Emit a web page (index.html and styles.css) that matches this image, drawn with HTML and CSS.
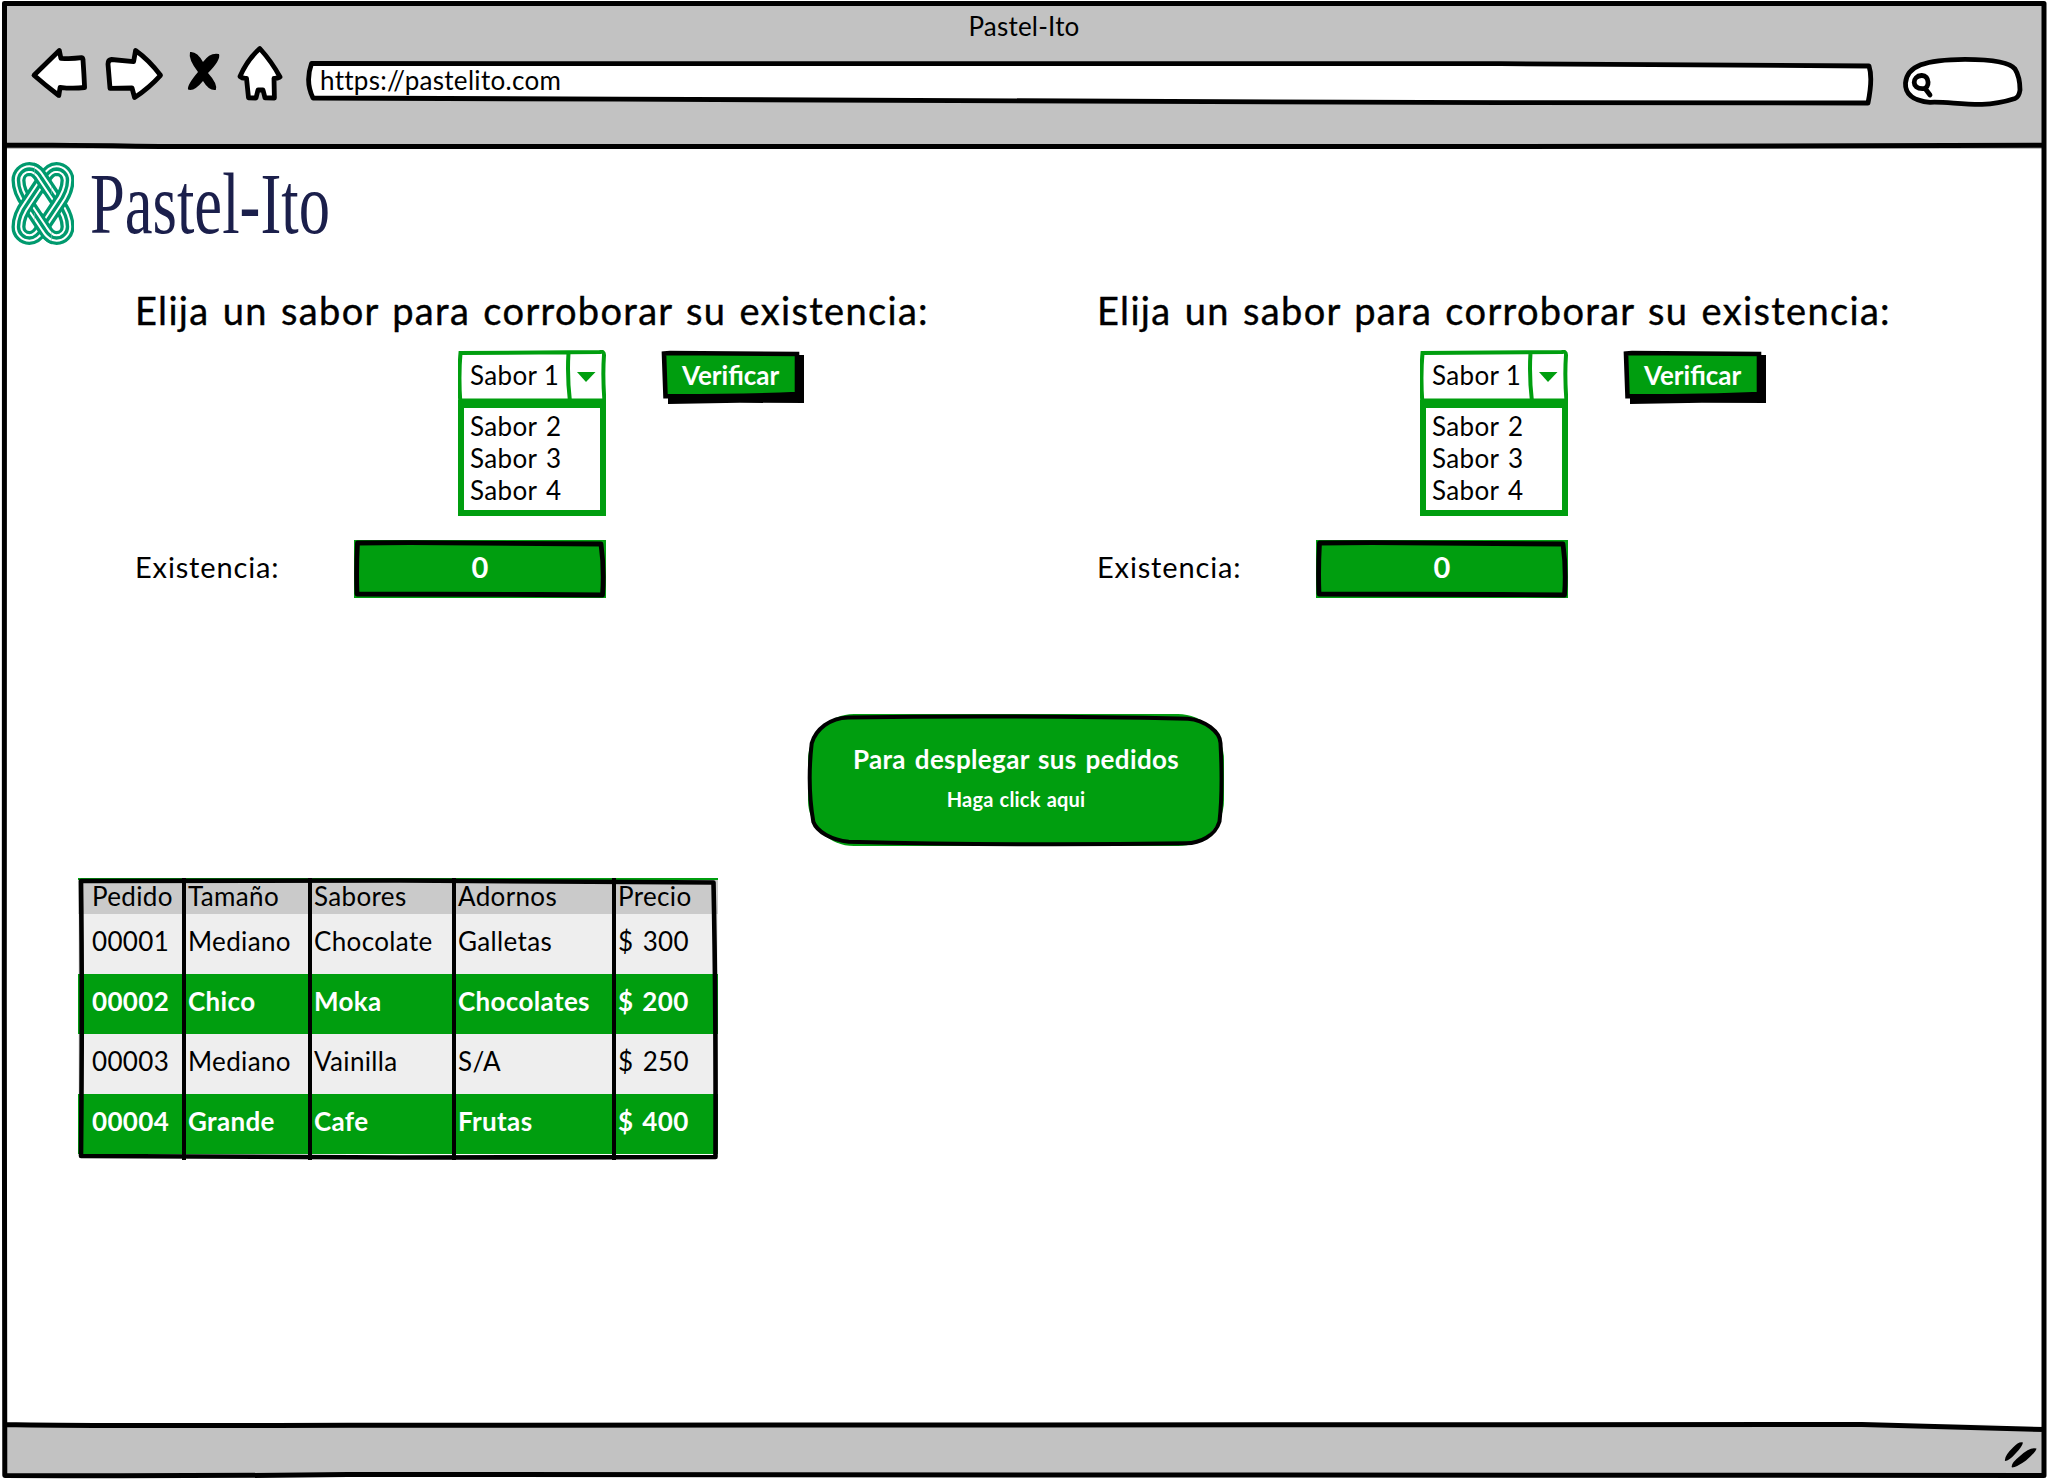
FILE: index.html
```html
<!DOCTYPE html>
<html lang="es">
<head>
<meta charset="utf-8">
<title>Pastel-Ito</title>
<link rel="stylesheet" href="styles.css">
</head>
<body>
<div class="window">
  <header class="toolbar">
    <div class="window-title">Pastel-Ito</div>
    <nav class="nav">
      <svg class="nav-icon back" viewBox="29 44 60 64" width="60" height="64"><path d="M34 75.3 59.3 50.5 60.9 58.3Q72 59 81.5 57.7Q83 58 83 60Q84 74 84.600 87.500Q72 89 60.100 87.300L58.800 95.500Q45 85 34 75.300Z"/></svg>
      <svg class="nav-icon forward" viewBox="103 44 62 64" width="62" height="64"><path d="M160.500 75.300Q149 60 135.600 50.500L133.600 61.700Q122 60.500 111.500 59.500Q108 60 108 64L110 88.300 132 88 134.600 97.500Q149 88 160.500 75.300Z"/></svg>
      <svg class="nav-icon stop" viewBox="184 44 39 64" width="39" height="64"><path class="solid" d="M190 52Q197 51 203 62Q210 52 219 54Q221 60 208 73Q218 84 215.800 90Q209 91 203 81Q194 92 188 89.500Q187 85 198 72Q188 59 190 52Z"/></svg>
      <svg class="nav-icon home" viewBox="235 44 50 64" width="50" height="64"><path d="M259.800 48.500Q272 62 280 77Q277 78.500 274 78.300L274.400 98 265 97.800 263 90 258 90 256 98 248.500 97.800 246.500 78.300Q242 78.500 240 76.500Q247 60 259.800 48.500Z"/></svg>
      <div class="address">
        <svg class="sketch" viewBox="304 44 1572 64" width="1572" height="64"><path d="M311.500 63.500Q900 62 1500 63.700L1869 66Q1873 78 1868 103L1500 102.700Q900 102 620 99.200L313 98Q305 82 311.500 63.500Z"/></svg>
        <span class="address-text">https://pastelito.com</span>
      </div>
      <svg class="nav-icon search" viewBox="1899 44 126 64" width="126" height="64"><path d="M1930 102.300C1912 101 1905 93 1905.500 83C1907 66 1925 59.500 1965 59.300C1990 59.300 2010 62 2015 69C2020 77 2020 86 2020 90Q2019 97 2015 98.500Q1998 104 1982 104.300C1960 104.500 1945 101.500 1930 102.300Z"/><path class="lens" d="M1921.500 75.500C1930 75 1930 89 1923 88.600C1911 89 1912 76 1921.500 75.500ZM1925.500 89 1930 95"/></svg>
    </nav>
  </header>

  <main class="page">
    <div class="brand">
      <svg class="brand-mark" viewBox="11 161 63 85" width="63" height="85">
        <defs>
          <path id="ring-a" d="M29.500 169C35 169 38.500 173 41.500 178L58.500 203.500C64 211 67.500 218 67.500 226.700A11.200 11.200 0 0 1 56.500 238C51 238 47.500 234 44.500 229L27.500 203.500C22 196 18.500 189 18.500 180.300A11.200 11.200 0 0 1 29.500 169Z"/>
          <path id="ring-b" d="M56.500 169C51 169 47.500 173 44.500 178L27.500 203.500C22 211 18.500 218 18.500 226.700A11.200 11.200 0 0 0 29.500 238C35 238 38.500 234 41.500 229L58.500 203.500C64 196 67.500 189 67.500 180.300A11.200 11.200 0 0 0 56.500 169Z"/>
          <clipPath id="crossings"><rect x="34.500" y="160" width="17" height="34"/><rect x="34.500" y="213" width="17" height="34"/></clipPath>
        </defs>
        <g><use href="#ring-a" class="band-edge"/><use href="#ring-a" class="band-gap"/><use href="#ring-a" class="band-core"/></g>
        <g><use href="#ring-b" class="band-edge"/><use href="#ring-b" class="band-gap"/><use href="#ring-b" class="band-core"/></g>
        <g clip-path="url(#crossings)"><use href="#ring-a" class="band-edge"/><use href="#ring-a" class="band-gap"/><use href="#ring-a" class="band-core"/></g>
      </svg>
      <span class="brand-name">Pastel-Ito</span>
    </div>

    <div class="checkers">
      <section class="checker">
        <h2>Elija un sabor para corroborar su existencia:</h2>
        <div class="choose">
          <div class="select">
            <div class="select-head">
              <svg class="sketch" viewBox="458 350 148 52" width="148" height="52"><path d="M460.300 402Q458.500 376 460.500 353L600 352Q604 351 604 355Q602.500 376 604.500 402M568.500 353Q567 376 570 402"/><path class="edge" d="M459 400.500H605"/><path class="caret" d="M577 372H595.500L586 382Z"/></svg>
              <span class="label">Sabor 1</span>
            </div>
            <ul class="options"><li>Sabor 2</li><li>Sabor 3</li><li>Sabor 4</li></ul>
          </div>
          <div class="button">
            <svg class="sketch" viewBox="661 350 144 55" width="144" height="55"><path class="shadow" d="M668 390H795V355H804V403L740 402.800 668 404Z"/><path class="face" d="M664 353.500 670 353 797 354V394Q740 396.500 665.500 396.300Z"/></svg>
            <span class="label bold">Verificar</span>
          </div>
        </div>
        <div class="stock">
          <span class="stock-label">Existencia:</span>
          <div class="field">
            <svg class="sketch" viewBox="354 540 252 58" width="252" height="58"><path d="M357.500 543 410 542.700 601 544Q604.500 570 602.500 595L540 594.500 357 594Q356 570 357.500 543Z"/></svg>
            <span class="bold">0</span>
          </div>
        </div>
      </section>
      <section class="checker">
        <h2>Elija un sabor para corroborar su existencia:</h2>
        <div class="choose">
          <div class="select">
            <div class="select-head">
              <svg class="sketch" viewBox="458 350 148 52" width="148" height="52"><path d="M460.300 402Q458.500 376 460.500 353L600 352Q604 351 604 355Q602.500 376 604.500 402M568.500 353Q567 376 570 402"/><path class="edge" d="M459 400.500H605"/><path class="caret" d="M577 372H595.500L586 382Z"/></svg>
              <span class="label">Sabor 1</span>
            </div>
            <ul class="options"><li>Sabor 2</li><li>Sabor 3</li><li>Sabor 4</li></ul>
          </div>
          <div class="button">
            <svg class="sketch" viewBox="661 350 144 55" width="144" height="55"><path class="shadow" d="M668 390H795V355H804V403L740 402.800 668 404Z"/><path class="face" d="M664 353.500 670 353 797 354V394Q740 396.500 665.500 396.300Z"/></svg>
            <span class="label bold">Verificar</span>
          </div>
        </div>
        <div class="stock">
          <span class="stock-label">Existencia:</span>
          <div class="field">
            <svg class="sketch" viewBox="354 540 252 58" width="252" height="58"><path d="M357.500 543 410 542.700 601 544Q604.500 570 602.500 595L540 594.500 357 594Q356 570 357.500 543Z"/></svg>
            <span class="bold">0</span>
          </div>
        </div>
      </section>
    </div>

    <div class="orders-button">
      <svg class="sketch" viewBox="806 712 420 136" width="420" height="136"><rect class="fill" x="808" y="714" width="416" height="132" rx="46"/><path class="line" d="M848 717.500Q1010 715 1188 718.700C1205 720 1220 732 1220.500 743Q1223 790 1219.500 821.500C1215 836 1200 843 1186 843.300Q1010 846 848.700 841.700C832 840 817 832 813.300 821.700Q807 785 811.700 743.300C816 729 830 718 848 717.500Z"/></svg>
      <span class="big bold">Para desplegar sus pedidos</span>
      <span class="small bold">Haga click aqui</span>
    </div>

    <div class="orders">
      <table>
        <thead><tr><th>Pedido</th><th>Tamaño</th><th>Sabores</th><th>Adornos</th><th>Precio</th></tr></thead>
        <tbody>
          <tr><td>00001</td><td>Mediano</td><td>Chocolate</td><td>Galletas</td><td>$ 300</td></tr>
          <tr class="hot"><td>00002</td><td>Chico</td><td>Moka</td><td>Chocolates</td><td>$ 200</td></tr>
          <tr><td>00003</td><td>Mediano</td><td>Vainilla</td><td>S/A</td><td>$ 250</td></tr>
          <tr class="hot"><td>00004</td><td>Grande</td><td>Cafe</td><td>Frutas</td><td>$ 400</td></tr>
        </tbody>
      </table>
      <svg class="sketch" viewBox="78 878 640 282" width="640" height="282"><path class="top-edge" d="M78 879H718"/><path d="M81 881 400 880.500 713.500 882.500Q716 1000 715.500 1157L400 1157.500 81 1156Q82.500 1000 81 881Z"/><path class="column" d="M184 878V1160M310 878V1160M454 878V1160M614 878V1160"/></svg>
    </div>
  </main>

  <footer class="status">
    <svg class="grip" viewBox="2002 1438 36 32" width="36" height="32"><path d="M2005 1461Q2004 1456 2013 1447.500Q2019 1441 2023 1442.500Q2022 1447 2016 1453Q2009 1461 2005 1461ZM2012 1467.500Q2010 1464 2020 1456Q2030 1446.500 2036.500 1448.500Q2036 1452 2026 1460.500Q2017 1467 2012 1467.500Z"/></svg>
  </footer>
  <svg class="frame" viewBox="0 0 2048 1480" width="2048" height="1480"><path class="footer-gap" d="M1862 1424.500 2044 1424V1429.500Z"/><path d="M4.500 3.500H2044Q2043.500 900 2044 1475.500Q1200 1476 348 1474.500Q180 1476.500 4.800 1475.500L4.300 1000Q4 400 4.500 3.500ZM5 145Q60 145 160 146.500H1500L2044 145.300M5 1424.500Q60 1426 348 1425.300L1862 1424.500 2044 1429.500"/></svg>
</div>
</body>
</html>
```
FILE: styles.css
```css
* { box-sizing: border-box; }

body {
  margin: 0;
  background: #fff;
  color: #000;
  font: 26px/32px Lato, "Liberation Sans", sans-serif;
  letter-spacing: .35px;
  word-spacing: 2.2px;
}

.window {
  position: relative;
  width: 2048px;
  height: 1480px;
  display: flex;
  flex-direction: column;
  overflow: hidden;
}

.frame {
  position: absolute;
  inset: 0;
  fill: none;
  stroke: #000;
  stroke-width: 5;
  stroke-linejoin: round;
}
.frame .footer-gap { fill: #fff; stroke: none; }

.sketch { position: absolute; top: 0; left: 0; }
.bold { font-weight: 700; color: #fff; }

/* browser chrome */
.toolbar { height: 146px; margin: 3px 4px -3px; background: #c2c2c2; }
.window-title { height: 41px; line-height: 47px; text-align: center; letter-spacing: .2px; }
.nav { display: flex; padding-left: 25px; }
.nav-icon, .address .sketch { fill: #fff; stroke: #000; stroke-width: 4.8; stroke-linejoin: round; stroke-linecap: round; }
.nav-icon .solid { fill: #000; stroke: none; }
.nav-icon .lens { fill: none; }
.forward { margin-left: 14px; }
.stop { margin-left: 19px; }
.home { margin-left: 12px; }
.address { position: relative; width: 1572px; height: 64px; margin-left: 19px; padding-left: 16px; line-height: 73px; letter-spacing: .3px; }
.address-text { position: relative; }
.search { margin-left: 23px; }

/* page */
.page { flex: 1; min-height: 0; }
.brand { display: flex; height: 134px; padding: 15px 0 0 11px; margin-left: -4px; padding-left: 15px; }
.brand { margin-left: 0; padding-left: 11px; }
.brand-mark { fill: none; }
.band-edge { stroke: #009a6e; stroke-width: 14; }
.band-gap { stroke: #fff; stroke-width: 7.4; }
.band-core { stroke: #009a6e; stroke-width: 3.4; }
.brand-name {
  margin-left: 16px;
  color: #1b1f4b;
  font: 86px/86px "Liberation Serif", serif;
  letter-spacing: 0;
  transform: scaleX(.728);
  transform-origin: 0 0;
}

.checkers { display: grid; grid-template-columns: 962px 962px; padding-left: 135px; }
h2 {
  margin: 0;
  height: 70px;
  font-size: 38px;
  font-weight: 400;
  line-height: 61px;
  letter-spacing: 1.33px;
  white-space: nowrap;
  -webkit-text-stroke: .4px #000;
}
.choose { display: flex; align-items: flex-start; padding-left: 323px; height: 190px; gap: 55px; }
.select { width: 148px; }
.select-head { position: relative; height: 50px; padding-left: 12px; line-height: 50px; word-spacing: 0; }
.select-head .sketch { fill: none; stroke: #009e0f; stroke-width: 4; }
.select-head .caret { fill: #009e0f; stroke: none; }
.label { position: relative; }
.options { margin: 0; height: 116px; padding: 2px 0 0 6px; border: 6px solid #009e0f; border-top-width: 8px; list-style: none; }
.button { position: relative; width: 144px; height: 55px; line-height: 50px; padding-left: 21px; letter-spacing: 0; }
.button .face { fill: #009e0f; stroke: #000; stroke-width: 4.6; }
.stock { display: flex; height: 58px; line-height: 54px; }
.stock-label { width: 219px; font-size: 29px; letter-spacing: .85px; }
.field { position: relative; width: 252px; background: #009e0f; text-align: center; font-size: 29px; }
.field .sketch { fill: none; stroke: #000; stroke-width: 4.8; stroke-linejoin: round; }
.field span { position: relative; }

.orders-button {
  position: relative;
  display: flex;
  flex-direction: column;
  align-items: center;
  width: 420px;
  height: 136px;
  margin: 114px 0 0 806px;
  padding-top: 31px;
}
.orders-button .fill { fill: #009e0f; }
.orders-button .line { fill: none; stroke: #000; stroke-width: 4; }
.orders-button span { position: relative; }
.big { line-height: 32px; }
.small { margin-top: 8px; font-size: 20px; letter-spacing: .2px; word-spacing: 1px; }

.orders { position: relative; width: 640px; height: 282px; margin: 30px 0 0 78px; }
.orders > .sketch { fill: none; stroke: #000; stroke-width: 4.6; stroke-linejoin: round; }
.orders .top-edge { stroke: #009e0f; stroke-width: 2; }
.orders .column { stroke-width: 4; }
table { width: 640px; table-layout: fixed; border-collapse: collapse; }
th, td { padding: 0 0 0 4px; text-align: left; white-space: nowrap; }
th:nth-child(1) { width: 106px; }
th:nth-child(2) { width: 126px; }
th:nth-child(3) { width: 144px; }
th:nth-child(4) { width: 160px; }
th:first-child, td:first-child { padding-left: 14px; }
th { height: 36px; background: #cacaca; font-weight: 400; line-height: 32px; }
td { height: 60px; background: #eee; line-height: 55px; vertical-align: top; }
.hot td { background: #009e0f; color: #fff; font-weight: 700; }

.status { display: flex; justify-content: flex-end; height: 52px; margin: 0 4px 4px; background: #c2c2c2; padding: 14px 6px 0 0; }
.grip { fill: #000; }
```
